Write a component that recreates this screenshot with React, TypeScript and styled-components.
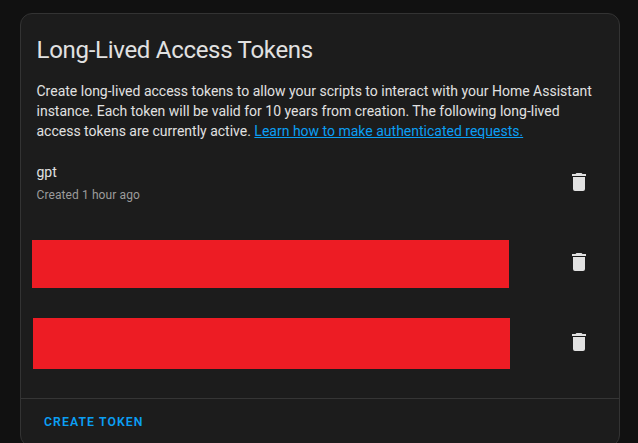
import React from "react";
import styled, { createGlobalStyle } from "styled-components";

const GlobalStyle = createGlobalStyle`
  html, body {
    margin: 0;
    height: 100%;
    overflow: hidden;
    background: #111111;
  }
  body {
    font-family: Roboto, "Noto Sans", sans-serif;
    font-size: 14px;
    line-height: 20px;
    color: #e1e1e1;
  }
`;

const Page = styled.main`
  padding: 13px 18px 0 20px;
`;

const Card = styled.section`
  box-sizing: border-box;
  width: 600px;
  height: 434px;
  display: flex;
  flex-direction: column;
  background: #1c1c1c;
  border: 1px solid #333333;
  border-radius: 12px;
`;

const Title = styled.h1`
  margin: 0;
  padding: 12px 16px 7px 15.5px;
  font-size: 24px;
  font-weight: 400;
  line-height: 48px;
  letter-spacing: -0.012em;
`;

const Content = styled.div`
  padding: 0 16px 16px 15.5px;
`;

const Description = styled.p`
  margin: 0 0 1px;
`;

const Link = styled.a`
  color: #0b9ff4;
  text-decoration: underline;
`;

const TokenRow = styled.div`
  height: 80px;
  display: flex;
  align-items: center;
  justify-content: space-between;
`;

const TokenInfo = styled.div`
  display: flex;
  flex-direction: column;
  padding-top: 2px;
`;

const TokenName = styled.span`
  line-height: 20px;
`;

const TokenCreated = styled.span`
  margin-top: 4px;
  font-size: 12px;
  line-height: 18px;
  letter-spacing: 0.1px;
  color: #9b9b9b;
`;

const Redaction = styled.div<{ $height: number; $indent: number; $drop: number }>`
  width: 477px;
  height: ${(p) => p.$height}px;
  margin-left: ${(p) => p.$indent}px;
  margin-top: ${(p) => p.$drop}px;
  background: #ed1c24;
`;

const IconButton = styled.button`
  width: 48px;
  height: 48px;
  padding: 12px;
  border: 0;
  background: none;
  color: #e1e1e1;

  svg {
    display: block;
    width: 24px;
    height: 24px;
    fill: currentColor;
  }
`;

const Actions = styled.footer`
  flex: 1;
  padding: 5px 16px;
  border-top: 1px solid #353535;
`;

const CreateButton = styled.button`
  height: 36px;
  padding: 0 7px;
  border: 0;
  background: none;
  font: 600 12.25px/36px Roboto, sans-serif;
  letter-spacing: 1.09px;
  text-transform: uppercase;
  color: #0b9ff4;
`;

const DeleteButton = () => (
  <IconButton aria-label="Delete">
    <svg viewBox="0 0 24 24">
      <path d="M19,4H15.5L14.5,3H9.5L8.5,4H5V6H19M6,19A2,2 0 0,0 8,21H16A2,2 0 0,0 18,19V7H6V19Z" />
    </svg>
  </IconButton>
);

export default function App() {
  return (
    <>
      <GlobalStyle />
      <Page>
        <Card>
          <Title>Long-Lived Access Tokens</Title>
          <Content>
            <Description>
              Create long-lived access tokens to allow your scripts to interact with your Home
              Assistant instance. Each token will be valid for 10 years from creation. The
              following long-lived access tokens are currently active.{" "}
              <Link href="#">Learn how to make authenticated requests.</Link>
            </Description>
            <TokenRow>
              <TokenInfo>
                <TokenName>gpt</TokenName>
                <TokenCreated>Created 1 hour ago</TokenCreated>
              </TokenInfo>
              <DeleteButton />
            </TokenRow>
            <TokenRow>
              <Redaction $height={48} $indent={-4.5} $drop={4} />
              <DeleteButton />
            </TokenRow>
            <TokenRow>
              <Redaction $height={51} $indent={-3.5} $drop={3} />
              <DeleteButton />
            </TokenRow>
          </Content>
          <Actions>
            <CreateButton>Create token</CreateButton>
          </Actions>
        </Card>
      </Page>
    </>
  );
}
